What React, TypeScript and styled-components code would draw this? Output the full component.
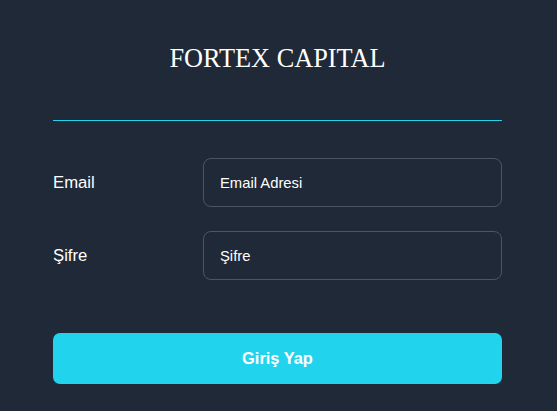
import React from "react";
import styled, { createGlobalStyle } from "styled-components";

const GlobalStyle = createGlobalStyle`
  html, body {
    margin: 0;
    padding: 0;
    background: #1f2937;
  }
  * {
    box-sizing: border-box;
  }
`;

const Page = styled.div`
  min-height: 411px;
  background: #1f2937;
  padding: 44px 0 0 53px;
`;

const Card = styled.form`
  width: 449px;
  display: flex;
  flex-direction: column;
`;

const Title = styled.h1`
  margin: 0;
  font-family: "Liberation Serif", "Times New Roman", serif;
  font-size: 26.3px;
  font-weight: 400;
  line-height: 30px;
  color: #ffffff;
  text-align: center;
`;

const Divider = styled.hr`
  margin: 46px 0 37px 0;
  border: none;
  height: 1px;
  background: #22d3ee;
`;

const Row = styled.div`
  display: flex;
  align-items: center;
  margin-bottom: 24px;
`;

const Label = styled.label`
  width: 150px;
  flex-shrink: 0;
  font-family: "Liberation Sans", Arial, sans-serif;
  font-size: 16.7px;
  color: #ffffff;
`;

const Input = styled.input`
  flex: 1;
  height: 49px;
  padding: 0 16px;
  background: transparent;
  border: 1px solid #4b5563;
  border-radius: 8px;
  font-family: "Liberation Sans", Arial, sans-serif;
  font-size: 14.8px;
  color: #ffffff;
  outline: none;
  &::placeholder {
    color: #ffffff;
    opacity: 1;
  }
`;

const Button = styled.button`
  margin-top: 29px;
  height: 51px;
  width: 100%;
  background: #22d3ee;
  color: #ffffff;
  border: none;
  border-radius: 7px;
  font-family: "Liberation Sans", Arial, sans-serif;
  font-size: 16.4px;
  font-weight: 700;
  cursor: pointer;
`;

const App = () => {
  const onSubmit = (event: React.FormEvent) => {
    event.preventDefault();
  };
  return (
    <>
      <GlobalStyle />
      <Page>
        <Card onSubmit={onSubmit}>
          <Title>FORTEX CAPITAL</Title>
          <Divider />
          <Row>
            <Label htmlFor="email">Email</Label>
            <Input id="email" type="email" placeholder="Email Adresi" />
          </Row>
          <Row>
            <Label htmlFor="password">Şifre</Label>
            <Input id="password" type="password" placeholder="Şifre" />
          </Row>
          <Button type="submit">Giriş Yap</Button>
        </Card>
      </Page>
    </>
  );
};

export default App;
